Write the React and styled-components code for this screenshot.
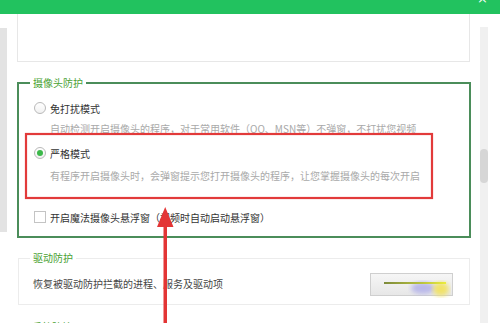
import React from "react";
import styled, { createGlobalStyle } from "styled-components";

const Global = createGlobalStyle`
  html, body { margin: 0; padding: 0; background: #fff; }
  body { width: 500px; height: 323px; overflow: hidden; font-family: "Noto Sans CJK SC", "Noto Sans", sans-serif; }
  #root { width: 500px; height: 323px; overflow: hidden; position: relative; }
`;

const TitleBar = styled.div`
  height: 14px;
  background: #22c25f;
  display: flex;
  justify-content: flex-end;
  overflow: hidden;
  padding-right: 12px;
`;

const Close = styled.span`
  color: #fff;
  font-family: "DejaVu Sans", sans-serif;
  font-size: 13px;
  line-height: 13px;
  margin-top: -8px;
`;

const Body = styled.div`
  display: flex;
  align-items: flex-start;
  height: 309px;
`;

const LeftStrip = styled.div`
  width: 7px;
  height: 204px;
  margin-top: 14px;
  background: #e3e3e3;
  flex: none;
`;

const Content = styled.div`
  width: 454px;
  margin-left: 10px;
  display: flex;
  flex-direction: column;
  flex: none;
`;

const TopBox = styled.div`
  height: 47px;
  border: 1px solid #e7e7e7;
  border-top: none;
  margin-right: 1px;
`;

const Group = styled.div`
  position: relative;
  margin-top: 20px;
  border: 2px solid #4b8d5a;
  height: 152px;
  padding: 0 0 0 15px;
  display: flex;
  flex-direction: column;
`;

const Legend = styled.div`
  position: absolute;
  top: ${p => p.$top}px;
  left: 11px;
  padding: 0 3px;
  background: #fff;
  color: ${p => p.$color || "#4aa233"};
  font-size: 10px;
  line-height: 14px;
`;

const OptionRow = styled.div`
  display: flex;
  align-items: center;
  gap: 4px;
  height: 16px;
  margin-top: ${p => p.$mt}px;
  font-size: 10px;
  color: #333;
`;

const Radio = styled.span`
  width: 10px;
  height: 10px;
  border-radius: 50%;
  border: 1px solid #b9b9b9;
  background: linear-gradient(#fff, #f1f1f1);
  display: flex;
  align-items: center;
  justify-content: center;
  flex: none;
  &::after {
    content: "";
    display: ${p => (p.$checked ? "block" : "none")};
    width: 6px;
    height: 6px;
    border-radius: 50%;
    background: #3cb84a;
  }
`;

const Check = styled.span`
  width: 10px;
  height: 10px;
  border: 1px solid #c4c4c4;
  background: #fff;
  flex: none;
`;

const Desc = styled.div`
  margin-top: ${p => p.$mt}px;
  padding-left: 16px;
  height: 14px;
  font-size: 10px;
  line-height: 14px;
  color: #a9a9a9;
  white-space: nowrap;
`;

const Section = styled.div`
  position: relative;
  margin-top: 20px;
  margin-left: 1px;
  margin-right: 1px;
  height: 45px;
  border: 1px solid #ececec;
  display: flex;
  align-items: center;
  justify-content: space-between;
  padding-left: 14px;
  padding-right: 16px;
`;

const SectionText = styled.div`
  font-size: 10px;
  color: #444;
  margin-top: 4px;
`;

const Button = styled.div`
  position: relative;
  width: 81px;
  height: 21px;
  margin-top: 6px;
  border: 1px solid #cfcfcf;
  background: linear-gradient(#f6f6f6, #e7e7e7);
`;

const Smudge = styled.svg`
  position: absolute;
  left: 8px;
  top: 2px;
  overflow: visible;
`;

const NextSection = styled.div`
  position: relative;
  margin-top: 18px;
  margin-left: 1px;
  height: 30px;
  border-top: 1px solid #ececec;
`;

const ScrollTrack = styled.div`
  width: 8px;
  height: 296px;
  margin-top: 13px;
  margin-left: 9px;
  background: #f0f0f0;
  flex: none;
  display: flex;
  flex-direction: column;
`;

const Thumb = styled.div`
  margin-top: 122px;
  height: 34px;
  border-radius: 4px;
  background: #d6d6d6;
`;

const Annotation = styled.svg`
  position: absolute;
  left: 0;
  top: 0;
  pointer-events: none;
`;

export default function App() {
  return (
    <>
      <Global />
      <TitleBar>
        <Close>×</Close>
      </TitleBar>
      <Body>
        <LeftStrip />
        <Content>
          <TopBox />
          <Group>
            <Legend $top={-8}>摄像头防护</Legend>
            <OptionRow $mt={16}>
              <Radio />
              <span>免打扰模式</span>
            </OptionRow>
            <Desc $mt={6}>自动检测开启摄像头的程序，对于常用软件（QQ、MSN等）不弹窗，不打扰您视频</Desc>
            <OptionRow $mt={9}>
              <Radio $checked />
              <span>严格模式</span>
            </OptionRow>
            <Desc $mt={8}>有程序开启摄像头时，会弹窗提示您打开摄像头的程序，让您掌握摄像头的每次开启</Desc>
            <OptionRow $mt={26}>
              <Check />
              <span>开启魔法摄像头悬浮窗（视频时自动启动悬浮窗）</span>
            </OptionRow>
          </Group>
          <Section>
            <Legend $top={-8}>驱动防护</Legend>
            <SectionText>恢复被驱动防护拦截的进程、服务及驱动项</SectionText>
            <Button>
              <Smudge width="72" height="20">
                <defs>
                  <linearGradient id="ln" x1="0" x2="1">
                    <stop offset="0" stopColor="#7d8a3c" />
                    <stop offset="0.6" stopColor="#b8c23e" />
                    <stop offset="1" stopColor="#ecec3a" />
                  </linearGradient>
                  <filter id="bl"><feGaussianBlur stdDeviation="2.5" /></filter>
                </defs>
                <ellipse cx="44" cy="12" rx="12" ry="6" fill="#b4b2ea" filter="url(#bl)" opacity="0.9" />
                <ellipse cx="62" cy="13" rx="8" ry="7" fill="#f2e25a" filter="url(#bl)" opacity="0.9" />
                <rect x="5" y="6" width="62" height="2" fill="url(#ln)" />
              </Smudge>
            </Button>
          </Section>
          <NextSection>
            <Legend $top={-4}>系统防护</Legend>
          </NextSection>
        </Content>
        <ScrollTrack>
          <Thumb />
        </ScrollTrack>
      </Body>
      <Annotation width="500" height="323">
        <rect x="26" y="134" width="406" height="64" fill="none" stroke="#e23a3a" strokeWidth="2.2" />
        <rect x="163.5" y="222" width="3.5" height="101" fill="#e33535" />
        <polygon points="165.2,207 157,227 173.5,227" fill="#e33535" />
      </Annotation>
    </>
  );
}
